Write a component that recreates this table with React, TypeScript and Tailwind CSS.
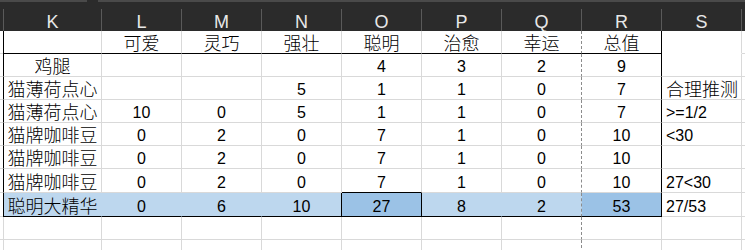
import React from "react";

const COLS = ["K", "L", "M", "N", "O", "P", "Q", "R", "S"];

const data: string[][] = [
  ["", "可爱", "灵巧", "强壮", "聪明", "治愈", "幸运", "总值", ""],
  ["鸡腿", "", "", "", "4", "3", "2", "9", ""],
  ["猫薄荷点心", "", "", "5", "1", "1", "0", "7", "合理推测"],
  ["猫薄荷点心", "10", "0", "5", "1", "1", "0", "7", ">=1/2"],
  ["猫牌咖啡豆", "0", "2", "0", "7", "1", "0", "10", "<30"],
  ["猫牌咖啡豆", "0", "2", "0", "7", "1", "0", "10", ""],
  ["猫牌咖啡豆", "0", "2", "0", "7", "1", "0", "10", "27<30"],
  ["聪明大精华", "0", "6", "10", "27", "8", "2", "53", "27/53"],
  ["", "", "", "", "", "", "", "", ""],
  ["", "", "", "", "", "", "", "", ""],
];

const heights = [
  "h-[23px]",
  "h-[23px]",
  "h-[23px]",
  "h-[23px]",
  "h-[23px]",
  "h-[23px]",
  "h-[24px]",
  "h-[24px]",
  "h-[23px]",
  "h-[23px]",
];

const isCJK = (s: string) => /[\u4e00-\u9fff]/.test(s);

function cellClass(r: number, c: number): string {
  const parts: string[] = ["flex items-end shrink-0 border-b border-r"];
  parts.push(c === 0 ? "w-[99px]" : "w-[80px]");
  if (c === 8) parts.push("justify-start pl-[4px]");
  else parts.push("justify-center");

  if (c === 0) {
    parts.push(r <= 7 ? "border-l border-l-black" : "border-l border-l-[#d9d9d9]");
  }

  if (c === 6) {
    parts.push("[border-right-style:dashed] border-r-[#8c8c8c]");
  } else if (c === 7 && r <= 7) {
    parts.push("border-r-black");
  } else if (r === 7 && (c === 3 || c === 4)) {
    parts.push("border-r-black");
  } else if (r === 7 && c <= 7) {
    parts.push("border-r-transparent");
  } else {
    parts.push("border-r-[#d9d9d9]");
  }

  if ((r === 0 || r === 7) && c <= 7) parts.push("border-b-black");
  else if (r === 6 && c === 4) parts.push("border-b-black");
  else if (r === 0 && c === 8) parts.push("border-b-white");
  else parts.push("border-b-[#d9d9d9]");

  if (r === 7 && c <= 7) {
    parts.push(c === 4 || c === 7 ? "bg-[#9bc2e6]" : "bg-[#bdd7ee]");
  } else {
    parts.push("bg-white");
  }
  return parts.join(" ");
}

export default function App() {
  return (
    <div className="w-[745px] h-[250px] overflow-hidden bg-white font-['Liberation_Sans','Noto_Sans_CJK_SC',sans-serif] text-black">
      <div className="flex h-[2px] bg-[#2b2b2b]">
        <div className="w-[87px] bg-[#4a4a4a]" />
        <div className="w-[11px] bg-[#2b2b2b]" />
        <div className="flex-1 bg-[#4a4a4a]" />
      </div>
      <div className="h-[7px] bg-[#2b2b2b]" />
      <div className="flex h-[22px] bg-[#2b2b2b] text-[#e8e8e8]">
        <div className="w-[3px] shrink-0" />
        {COLS.map((l, i) => (
          <div
            key={l}
            className={
              (i === 0 ? "w-[99px] border-l " : "w-[80px] ") +
              "shrink-0 flex items-end justify-center border-r border-[#5a5a5a] text-[18px] leading-none"
            }
          >
            {l}
          </div>
        ))}
        <div className="flex-1" />
      </div>
      {data.map((row, r) => (
        <div key={r} className={"flex " + heights[r]}>
          <div className="w-[3px] shrink-0 border-b border-[#d9d9d9] bg-white" />
          {row.map((t, c) => (
            <div key={c} className={cellClass(r, c)}>
              {t !== "" && (
                <span
                  className={
                    isCJK(t)
                      ? "text-[18px] leading-none whitespace-nowrap font-light"
                      : "text-[16px] leading-none whitespace-nowrap pb-[1px]"
                  }
                >
                  {t}
                </span>
              )}
            </div>
          ))}
          <div className="flex-1 border-b border-[#d9d9d9] bg-white" />
        </div>
      ))}
    </div>
  );
}
